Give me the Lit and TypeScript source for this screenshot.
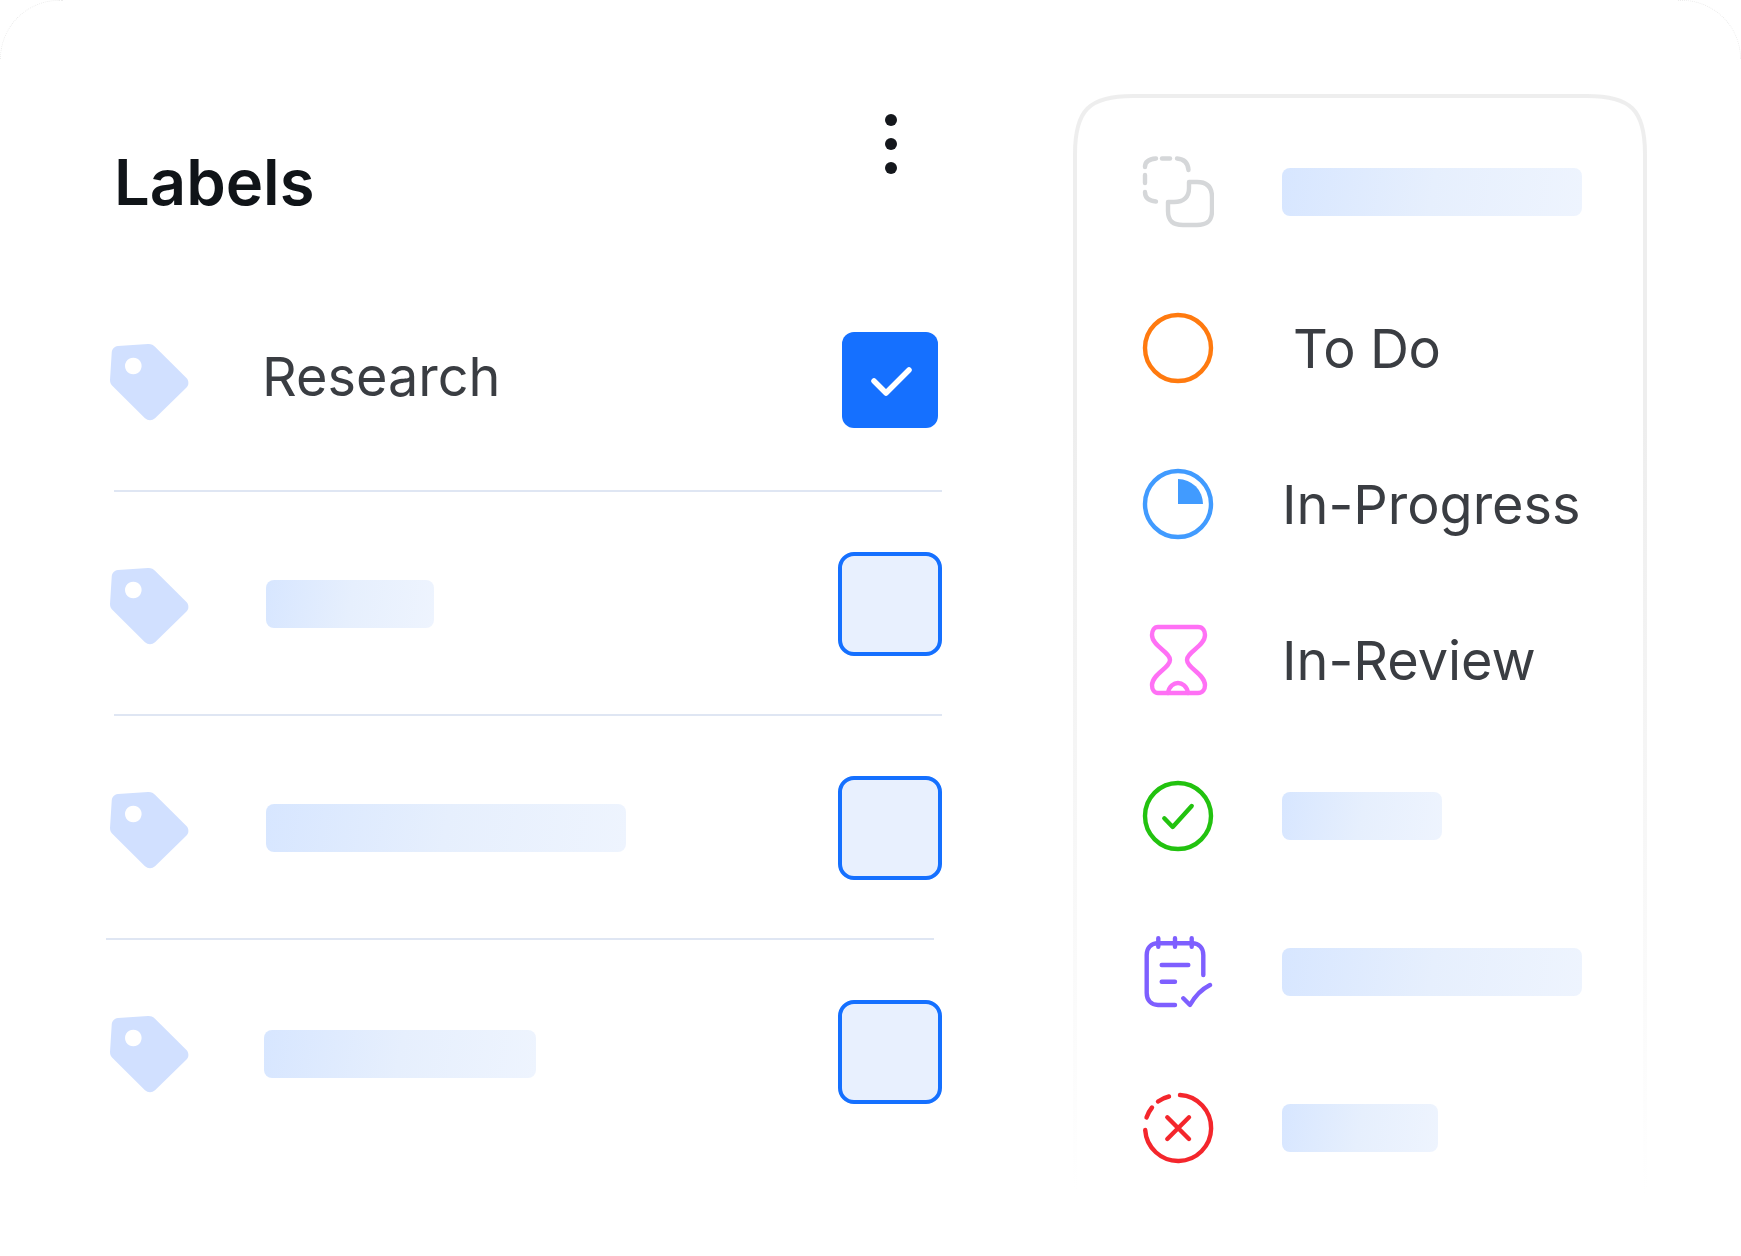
import { LitElement, html, css, svg } from "lit";
import { customElement } from "lit/decorators.js";

const tagIcon = html`
  <svg class="tag" viewBox="0 0 82 84" width="82" height="84">
    <path
      fill="#d1e0ff"
      fill-rule="evenodd"
      d="M9 6 L39 4 C42 3.8 44.5 5 46 6.7 L77.7 38.3 C80 41 80 45.5 77.5 47.5 L46 78.3 C43 80.8 39 80.8 36 78.3 L4.3 46.7 C2 44.5 1 43 1 40 L2.7 13 C3 9 5 6.5 9 6 Z M24.3 17.7 a8.3 8.3 0 1 0 0.01 0 Z"
    />
  </svg>
`;

type StatusRow = { icon: unknown; label?: string; bar?: number; cls?: string };

const icon = (color: string, body: unknown) => html`
  <svg
    class="status-icon"
    viewBox="0 0 72 72"
    width="72"
    height="72"
    fill="none"
    stroke=${color}
    stroke-width="4.4"
    stroke-linecap="round"
    stroke-linejoin="round"
  >
    ${body}
  </svg>
`;

const statuses: StatusRow[] = [
  {
    bar: 300,
    icon: icon(
      "#d5d7d9",
      svg`
        <path d="M14 2.5 C7 3 3 6 3 11" />
        <path d="M20 2.5 H28" />
        <path d="M35 2.5 C42 3 46 7 46.5 14" />
        <path d="M3 19 V27" />
        <path d="M3 36 C3 42 7 45 14 45.5" />
        <path d="M47 26 H55 C65 26 70 31 70 41 V55 C70 65 65 69 55 69 H41 C31 69 26 65 26 55 V46 H32 C42 46 47 41 47 32 Z" />
      `,
    ),
  },
  {
    label: "To Do",
    cls: "todo",
    icon: icon("#ff7a0f", svg`<circle cx="36" cy="36" r="33" />`),
  },
  {
    label: "In-Progress",
    icon: icon(
      "#419bff",
      svg`
        <circle cx="36" cy="36" r="33" />
        <path d="M36 11 A25 25 0 0 1 61 36 H36 Z" fill="#419bff" stroke="none" />
      `,
    ),
  },
  {
    label: "In-Review",
    icon: icon(
      "#ff70f5",
      svg`
        <path d="M16 3 H56 C61 3 63 7 63 11 C63 22 45 28 45 36 C45 44 63 50 63 61 C63 65 61 69 56 69 H16 C12 69 10 65 10 61 C10 50 28 44 28 36 C28 28 10 22 10 11 C10 7 12 3 16 3 Z" />
        <path d="M26 69 C27 62 32 59 36 59 C40 59 45 62 46 69" />
      `,
    ),
  },
  {
    bar: 160,
    icon: icon(
      "#22c20f",
      svg`
        <circle cx="36" cy="36" r="33" />
        <path d="M22.3 38.3 L30.7 47 L49.7 26" />
      `,
    ),
  },
  {
    bar: 300,
    icon: icon(
      "#7e5fff",
      svg`
        <path d="M61.3 39 V19 C61.3 12 57 7.3 50 7.3 H16 C9 7.3 4.7 12 4.7 19 V57 C4.7 64 9 69 16 69 H33" />
        <path d="M16.3 2.3 V10.7 M33 2.3 V10.7 M49.7 2.3 V10.7" />
        <path d="M19.7 29 H46.3 M19.7 45.7 H33" />
        <path d="M41.3 62.3 L48 69 C53 60 60 53 68 49" />
      `,
    ),
  },
  {
    bar: 156,
    icon: icon(
      "#f4262c",
      svg`
        <path d="M38 3 A33 33 0 1 1 3.2 38" />
        <path d="M16 9.5 A33 33 0 0 1 27 4.5" />
        <path d="M4.5 25.5 A33 33 0 0 1 10 15.5" />
        <path d="M25.3 25.3 L47 47 M47 25.3 L25.3 47" />
      `,
    ),
  },
];

@customElement("app-root")
export class AppRoot extends LitElement {
  static styles = css`
    :host {
      display: block;
      width: 1741px;
      height: 1256px;
      background: #fff;
      font-family: Inter, "Liberation Sans", sans-serif;
      overflow: hidden;
    }

    .card {
      position: relative;
      display: flex;
      height: 100%;
      box-sizing: border-box;
      padding-left: 110px;
    }

    .card::before,
    .card::after {
      content: "";
      position: absolute;
      top: 0;
      width: 62px;
      height: 58px;
      border-top: 1px dotted #ececec;
    }

    .card::before {
      left: 0;
      border-left: 1px dotted #ececec;
      border-top-left-radius: 62px;
    }

    .card::after {
      right: 0;
      border-right: 1px dotted #ececec;
      border-top-right-radius: 62px;
    }

    .labels {
      width: 832px;
      margin-right: 131px;
      flex: none;
    }

    .header {
      display: flex;
      justify-content: space-between;
      align-items: flex-start;
      box-sizing: border-box;
      height: 268px;
      padding: 114px 45px 0 4px;
    }

    h1 {
      margin: 36px 0 0;
      font-size: 63.3px;
      line-height: 64px;
      font-weight: 600;
      color: #101418;
    }

    .row {
      display: flex;
      align-items: center;
      box-sizing: border-box;
      height: 224px;
      padding-top: 2px;
      margin-left: 4px;
      border-bottom: 2px solid #dfe6f3;
    }

    .row:last-child {
      border-bottom-color: transparent;
    }

    .row.shifted {
      margin-left: -4px;
      margin-right: 8px;
    }

    .tag {
      flex: none;
      margin: 4px 75px 0 -5px;
    }

    .row.shifted .tag {
      margin-left: 3px;
    }

    .row.shifted .box {
      margin-right: -8px;
    }

    .row.shifted + .row .bar {
      margin: 4px 0 0 -2px;
    }

    .name {
      margin: -7px 0 0 -4px;
      font-size: 54px;
      font-weight: 400;
      color: #3a3d42;
      line-height: 64px;
    }

    .box {
      margin-left: auto;
      box-sizing: border-box;
      width: 104px;
      height: 104px;
      border: 4px solid #1570ff;
      border-radius: 16px;
      background: #e8f0fe;
    }

    .box.checked {
      width: 96px;
      height: 96px;
      margin-right: 4px;
      border: none;
      border-radius: 12px;
      background: #1570ff;
      display: flex;
      align-items: center;
      justify-content: center;
    }

    .box.checked svg {
      margin: 4px 0 0 4px;
    }

    .bar {
      height: 48px;
      border-radius: 8px;
      background: linear-gradient(100deg, #d7e6ff 0%, #e6effd 50%, #eef4fe 100%);
    }

    .statuses {
      position: relative;
      flex: none;
      width: 574px;
      box-sizing: border-box;
      padding: 20px 0 0 69px;
      margin-top: 94px;
      height: 1099px;
    }

    .outline {
      position: absolute;
      inset: 0;
    }

    .status {
      position: relative;
      display: flex;
      align-items: center;
      gap: 68px;
      height: 156px;
    }

    .status-icon {
      flex: none;
      margin-right: 1px;
    }

    .status-label {
      margin: 2px 0 0 -1px;
      font-size: 54px;
      font-weight: 400;
      color: #3a3d42;
      line-height: 64px;
    }

    .status-label.todo {
      margin-left: 10px;
      letter-spacing: -0.4px;
    }

    .status .bar {
      margin-left: -1px;
    }
  `;

  render() {
    const rows = [
      { bar: 168 },
      { bar: 360, shifted: true },
      { bar: 272 },
    ];
    return html`
      <div class="card">
        <section class="labels">
          <div class="header">
            <h1>Labels</h1>
            <svg width="12" height="60" viewBox="0 0 12 60" fill="#14171c">
              <circle cx="6" cy="6" r="6" />
              <circle cx="6" cy="30" r="6" />
              <circle cx="6" cy="54" r="6" />
            </svg>
          </div>
          <div class="row">
            ${tagIcon}
            <span class="name">Research</span>
            <div class="box checked">
              <svg width="42" height="30" viewBox="0 0 42 30" fill="none" stroke="#fff" stroke-width="5.5" stroke-linecap="round" stroke-linejoin="round">
                <path d="M3 14 L15 26 L38 3" />
              </svg>
            </div>
          </div>
          ${rows.map(
            (r) => html`
              <div class="row ${r.shifted ? "shifted" : ""}">
                ${tagIcon}
                <div class="bar" style="width:${r.bar}px"></div>
                <div class="box"></div>
              </div>
            `,
          )}
        </section>
        <section class="statuses">
          <svg class="outline" width="574" height="1099" viewBox="0 0 574 1099" fill="none">
            <defs>
              <linearGradient id="fade" gradientUnits="userSpaceOnUse" x1="0" y1="0" x2="0" y2="1099">
                <stop offset="0.3" stop-color="#eeeeee" />
                <stop offset="1" stop-color="#ffffff" />
              </linearGradient>
            </defs>
            <path
              stroke="url(#fade)"
              stroke-width="4"
              d="M2 1099 V60 C2 16 16 2 60 2 H514 C558 2 572 16 572 60 V1099"
            />
          </svg>
          ${statuses.map(
            (s) => html`
              <div class="status">
                ${s.icon}
                ${s.label
                  ? html`<span class="status-label ${s.cls ?? ""}">${s.label}</span>`
                  : html`<div class="bar" style="width:${s.bar}px"></div>`}
              </div>
            `,
          )}
        </section>
      </div>
    `;
  }
}

declare global {
  interface HTMLElementTagNameMap {
    "app-root": AppRoot;
  }
}
